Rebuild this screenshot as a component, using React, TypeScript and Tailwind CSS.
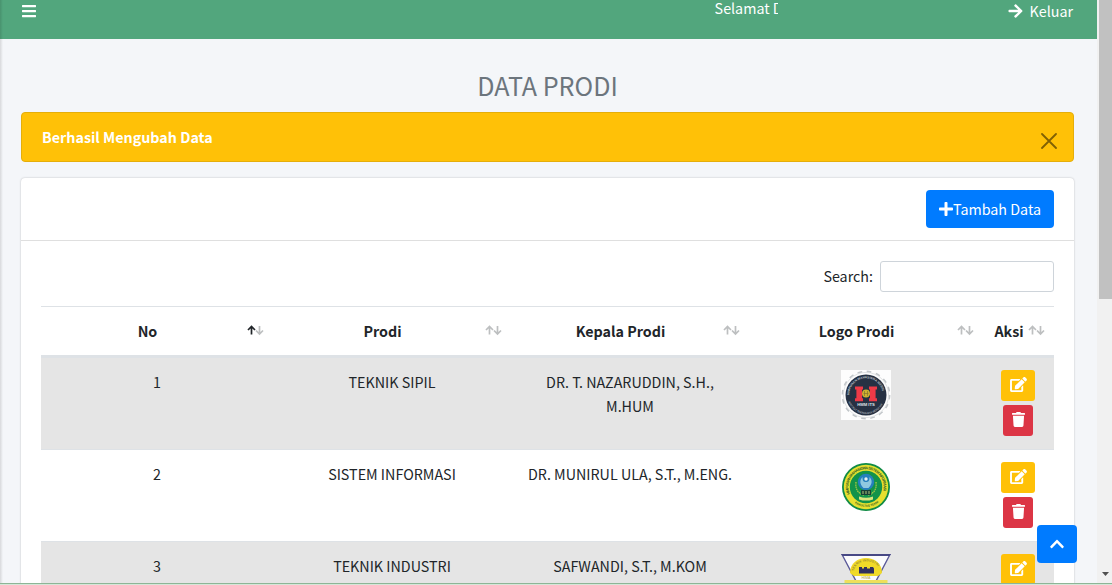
import React from "react";
import { FaArrowRight, FaBars, FaChevronUp, FaEdit, FaPlus, FaTrash } from "react-icons/fa";

function SortArrows({ active = false }: { active?: boolean }) {
  return (
    <svg className="absolute right-[9px] top-[18px] h-[11px] w-[17px]" viewBox="0 0 17 11" fill="none" strokeWidth="1.7">
      <path d="M4.5 9.5V1.5M1 5L4.5 1.5L8 5" stroke={active ? "#212529" : "#bdbfc0"} />
      <path d="M12.5 1V9M9 5.5L12.5 9L16 5.5" stroke="#bdbfc0" />
    </svg>
  );
}

function SipilLogo() {
  return (
    <svg className="h-[50px] w-[50px]" viewBox="0 0 50 50">
      <defs>
        <path id="sipil-top" d="M8.3 25a16.7 16.7 0 0 1 33.4 0" />
        <path id="sipil-bottom" d="M6 25a19 19 0 0 0 38 0" />
      </defs>
      <rect width="50" height="50" fill="#fdfdfd" />
      <circle cx="25" cy="25" r="23.6" fill="none" stroke="#c3c7ca" strokeWidth="1.6" strokeDasharray="4.6 4.67" />
      <circle cx="25" cy="25" r="22.6" fill="#fdfdfd" stroke="#cdd0d3" strokeWidth="0.6" />
      <circle cx="25" cy="25" r="20.5" fill="#263143" />
      <text fontSize="3.2" fontWeight="700" fill="#b9c0c8" textLength="48" className="font-['Liberation_Sans',sans-serif]">
        <textPath href="#sipil-top">HIMPUNAN MAHASISWA MESIN</textPath>
      </text>
      <text fontSize="2.7" fontWeight="700" fill="#a3abb5" className="font-['Liberation_Sans',sans-serif]">
        <textPath href="#sipil-bottom" startOffset="7">INSTITUT TEKNOLOGI SEPULUH</textPath>
      </text>
      <path d="M14 16.5h8v3h-1v3.3h2v2h-2v3.4h1v3h-8v-3h1.4v-8.7H14zM28 16.5h8v3h-1.4v8.7H36v3h-8v-3h1v-3.4h-2v-2h2v-3.3h-1z" fill="#ee3a47" />
      <circle cx="25" cy="23.5" r="3.9" fill="#cdb22f" />
      <path d="M23.5 21v5M26.5 21v5M22.5 23.5h5" stroke="#84702f" strokeWidth="0.7" />
      <text x="25" y="36.4" textAnchor="middle" fontSize="4.2" fontWeight="700" fill="#dfe3e8" className="font-['Liberation_Sans',sans-serif]">HMM ITS</text>
    </svg>
  );
}

function InformasiLogo() {
  return (
    <svg className="h-[50px] w-[50px]" viewBox="0 0 50 50">
      <defs>
        <path id="si-top" d="M8.9 32a17.6 17.6 0 1 1 32.2 0" />
        <path id="si-bottom" d="M11.5 39.5a19.8 19.8 0 0 0 27 0" />
      </defs>
      <circle cx="25" cy="25" r="24" fill="#108b45" />
      <circle cx="25" cy="25" r="22.2" fill="#e6e02f" />
      <circle cx="25" cy="25" r="16.2" fill="#12934a" />
      <text fontSize="3.8" fontWeight="700" fill="#2f5c22" textLength="66" className="font-['Liberation_Sans',sans-serif]">
        <textPath href="#si-top">HIMPUNAN MAHASISWA SISTEM INFORMASI</textPath>
      </text>
      <text fontSize="3" fontWeight="700" fill="#2f5c22" className="font-['Liberation_Sans',sans-serif]">
        <textPath href="#si-bottom" startOffset="3">FAKULTAS TEKNIK</textPath>
      </text>
      <circle cx="25" cy="20" r="8.2" fill="#2580bd" />
      <path d="M22.5 26c-4-4-4-8-1-11 0 4 1 5 3.5 5s3.5-1 3.5-5c3 3 3 7-1 11z" fill="#8fc9e0" />
      <circle cx="25" cy="17" r="1.7" fill="#e7f2f4" />
      <path d="M15 20c-1 8 3 12 8 13M35 20c1 8-3 12-8 13" fill="none" stroke="#a9c845" strokeWidth="1.3" strokeDasharray="1.5 0.7" />
      <path d="M20 28h10v5H20z" fill="#173f35" />
      <path d="M22 29v3M25 29v3M28 29v3" stroke="#d8e48c" strokeWidth="0.8" />
      <path d="M18 34.6q7 2.4 14 0v2.8q-7 2.4-14 0z" fill="#d9e57f" />
    </svg>
  );
}

function IndustriLogo() {
  return (
    <svg className="h-[50px] w-[50px]" viewBox="0 0 50 50">
      <defs>
        <path id="industri-arc" d="M13 17a12.6 9.6 0 0 1 25.2 0" />
      </defs>
      <path d="M1 0.5h48L35 27H15z" fill="#fbfbfd" stroke="#5a5998" strokeWidth="1.4" />
      <path d="M0 0h50l-1.5 2h-47z" fill="#484985" />
      <path d="M9 19C9 9 17 4 25 4s16 5 16 15l-4 3H13z" fill="#f0da28" />
      <text fontSize="3.2" fontWeight="700" fill="#9a8930" textLength="30" className="font-['Liberation_Sans',sans-serif]">
        <textPath href="#industri-arc">TEKNIK INDUSTRI</textPath>
      </text>
      <path d="M18 13h3v1.6h2V13h3v1.6h3V13h3l1 1.6v4.8H18z" fill="#30305f" />
      <text x="25" y="25.2" textAnchor="middle" fontSize="3.6" fill="#b5a645" className="font-['Liberation_Sans',sans-serif]">HIMA</text>
      <rect x="3.5" y="26" width="43" height="10" fill="#eee05a" />
      <text x="25" y="34.5" textAnchor="middle" fontSize="9" fontWeight="700" fill="#fbfbf0" textLength="40" className="font-['Liberation_Sans',sans-serif]">INDUSTRI</text>
    </svg>
  );
}

const rows = [
  { no: 1, prodi: "TEKNIK SIPIL", kepala: ["DR. T. NAZARUDDIN, S.H.,", "M.HUM"], logo: <SipilLogo /> },
  { no: 2, prodi: "SISTEM INFORMASI", kepala: ["DR. MUNIRUL ULA, S.T., M.ENG."], logo: <InformasiLogo /> },
  { no: 3, prodi: "TEKNIK INDUSTRI", kepala: ["SAFWANDI, S.T., M.KOM"], logo: <IndustriLogo /> },
];

const headings = ["No", "Prodi", "Kepala Prodi", "Logo Prodi", "Aksi"];

export default function App() {
  return (
    <div className="relative flex h-[585px] w-[1112px] overflow-hidden bg-[#f4f6f9] font-['Noto_Sans_CJK_SC',sans-serif] text-[14.3px] leading-6 text-[#212529]">
      <div className="flex h-full w-[1097px] flex-col">
        <header className="flex h-[39px] shrink-0 items-start justify-between bg-[#52a67d] pl-[22px] pr-6 text-white">
          <FaBars className="mt-[3px] h-4 w-[14px]" />
          <div className="-mt-px flex">
            <div className="-mt-[3px] mr-[230px] w-[63px] overflow-hidden whitespace-nowrap">Selamat Datang</div>
            <a className="flex items-center gap-[7px]">
              <FaArrowRight className="h-4 w-[15px]" />
              <span className="whitespace-nowrap">Keluar</span>
            </a>
          </div>
        </header>

        <main className="flex min-h-0 flex-1 flex-col pl-[21px] pr-[23px]">
          <h1 className="mt-[28px] h-[45px] shrink-0 text-center text-[25.1px] leading-[36px] text-[#6c757d]">DATA PRODI</h1>

          <div className="flex h-[50px] shrink-0 items-center justify-between rounded-[4px] border border-[#e5ae0a] bg-[#ffc107] pl-5 pr-4 text-white">
            <strong>Berhasil Mengubah Data</strong>
            <svg className="mt-[7px] h-4 w-4" viewBox="0 0 16 16" stroke="#806104" strokeWidth="1.8" strokeLinecap="round">
              <path d="M1 1L15 15M15 1L1 15" />
            </svg>
          </div>

          <section className="mt-4 h-[430px] shrink-0 rounded-t-[4px] bg-white shadow-[0_0_2px_rgba(0,0,0,0.25)]">
            <div className="flex h-[63px] items-start justify-end border-b border-[#dfdfdf] pr-5 pt-3">
              <button className="flex h-[38px] w-[128px] items-center justify-center rounded-[4px] bg-[#007bff] text-white">
                <FaPlus className="mb-px h-4 w-[14px]" />
                <span className="whitespace-nowrap">Tambah Data</span>
              </button>
            </div>

            <div className="px-5 pt-5">
              <label className="flex items-center justify-end gap-[7px]">
                <span className="mb-px">Search:</span>
                <input className="h-[31px] w-[174px] rounded-[3px] border border-[#ced4da] bg-white" />
              </label>

              <div className="mt-[14px]">
                <div className="grid h-[51px] grid-cols-[232px_238px_238px_234px_71px] border-b-2 border-t border-b-[#dee2e6] border-t-[#dee2e6]">
                  {headings.map((heading, index) => (
                    <div key={heading} className="relative flex items-center justify-center pr-[19px] font-bold">
                      {heading}
                      <SortArrows active={index === 0} />
                    </div>
                  ))}
                </div>
                {rows.map((row) => (
                  <div
                    key={row.no}
                    className="grid h-[92px] grid-cols-[232px_238px_238px_234px_71px] border-t border-[#dee2e6] pt-3 text-center odd:bg-white even:bg-[#e5e5e5]"
                  >
                    <div>{row.no}</div>
                    <div>{row.prodi}</div>
                    <div>
                      {row.kepala.map((line) => (
                        <div key={line}>{line}</div>
                      ))}
                    </div>
                    <div className="flex justify-center">{row.logo}</div>
                    <div className="flex flex-col items-center gap-1 pr-px text-white">
                      <button className="flex h-[31px] w-[34px] items-center justify-center rounded-[3px] bg-[#ffc107]">
                        <FaEdit className="mb-[2px] h-[15px] w-[17px]" />
                      </button>
                      <button className="flex h-[31px] w-[30px] items-center justify-center rounded-[3px] bg-[#dc3545]">
                        <FaTrash className="mb-[2px] h-[15px] w-[13px]" />
                      </button>
                    </div>
                  </div>
                ))}
              </div>
            </div>
          </section>
        </main>
      </div>

      <aside className="flex h-full w-[15px] flex-col items-end bg-[#f1f1f1]">
        <div className="h-[299px] w-[13px] bg-[#c1c1c1]" />
        <svg className="mr-[3px] mt-[273px] h-1 w-[7px]" viewBox="0 0 7 4">
          <path d="M0 0h7L3.5 4z" fill="#505050" />
        </svg>
      </aside>

      <div className="absolute inset-y-0 left-0 w-[3px] bg-linear-to-r from-black/12 to-transparent" />
      <button className="absolute left-[1037px] top-[525px] flex h-[38px] w-10 items-center justify-center rounded-[4px] bg-[#007bff] text-white">
        <FaChevronUp className="h-4 w-[14px]" />
      </button>
      <div className="absolute inset-x-0 bottom-0 h-[2px] border-t border-[#8db596] bg-[#d5e6d8]" />
    </div>
  );
}
